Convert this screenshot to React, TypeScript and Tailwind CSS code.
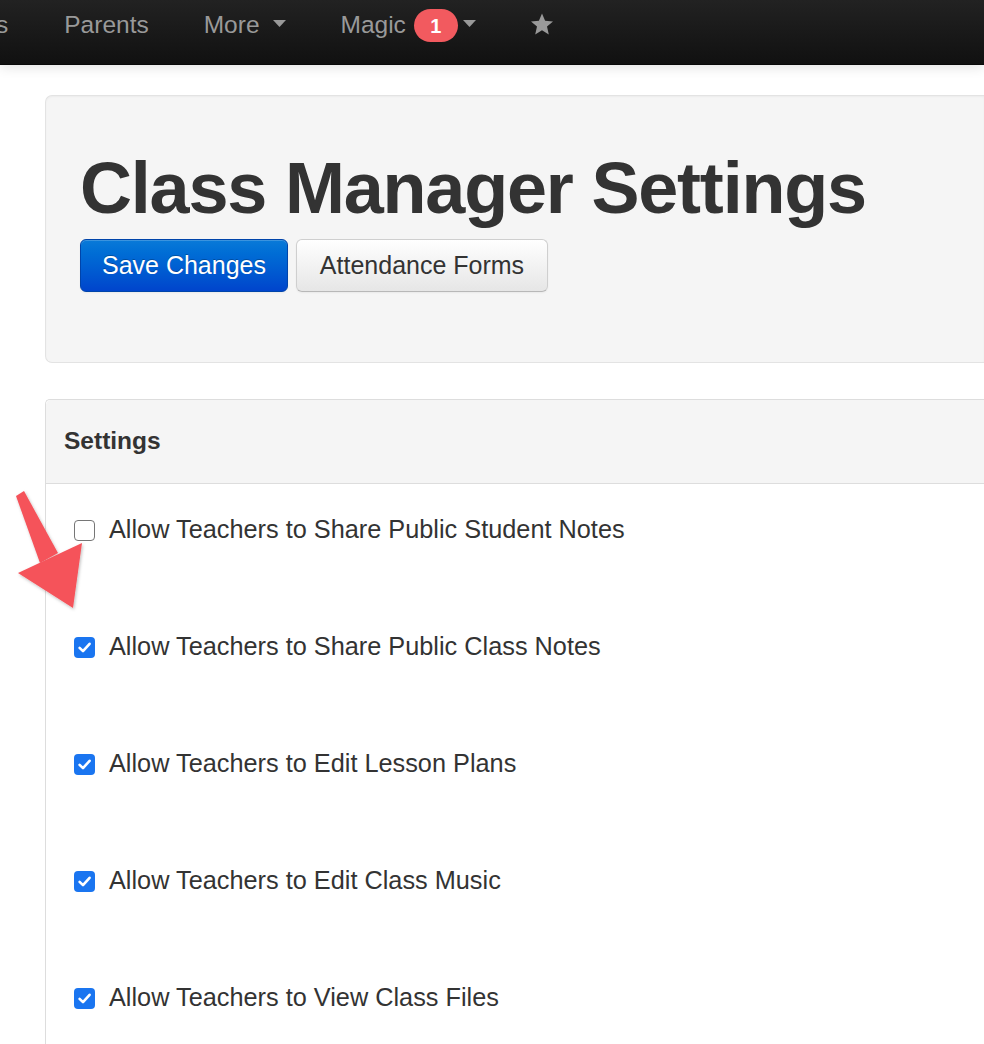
import React from "react";

const font = { fontFamily: '"Liberation Sans", Arial, Helvetica, sans-serif' };

function Caret({ className }: { className: string }) {
  return (
    <svg width="13" height="7" viewBox="0 0 13 7" className={className}>
      <path d="M0 0 L13 0 L6.5 7 Z" fill="#999" />
    </svg>
  );
}

function Star() {
  return (
    <svg width="24" height="23" viewBox="0 0 24 23">
      <path
        d="M12 0.5 L15.1 7.7 L23 8.4 L17 13.6 L18.8 21.4 L12 17.3 L5.2 21.4 L7 13.6 L1 8.4 L8.9 7.7 Z"
        fill="#999"
      />
    </svg>
  );
}

function Checkbox({ checked }: { checked: boolean }) {
  if (!checked) {
    return (
      <span className="box-border inline-block w-[21px] h-[21px] rounded-[4px] border-[1.5px] border-[#767676] bg-white shrink-0" />
    );
  }
  return (
    <span className="inline-flex items-center justify-center w-[21px] h-[21px] rounded-[4px] bg-[#1a75f0] shrink-0">
      <svg width="15" height="15" viewBox="0 0 15 15">
        <path
          d="M2.6 7.8 L6 11.2 L12.6 3.8"
          fill="none"
          stroke="#fff"
          strokeWidth="2.6"
          strokeLinecap="round"
          strokeLinejoin="round"
        />
      </svg>
    </span>
  );
}

const rows = [
  { label: "Allow Teachers to Share Public Student Notes", checked: false },
  { label: "Allow Teachers to Share Public Class Notes", checked: true },
  { label: "Allow Teachers to Edit Lesson Plans", checked: true },
  { label: "Allow Teachers to Edit Class Music", checked: true },
  { label: "Allow Teachers to View Class Files", checked: true },
];

export default function App() {
  return (
    <div className="relative min-h-[1044px] bg-white overflow-hidden" style={font}>
      {/* Navbar */}
      <div className="relative z-10 h-[65px] bg-gradient-to-b from-[#222] to-[#111] border-b border-[#0a0a0a] shadow-[0_2px_12px_rgba(0,0,0,0.12)]">
        <div className="flex items-start pt-[12px] text-[24.5px] leading-[25px] text-[#999] whitespace-nowrap">
          <span className="ml-[-4px] pr-[56px]">s</span>
          <span className="pr-[55px]">Parents</span>
          <span className="flex items-center h-[25px] pr-[55px]">
            More
            <Caret className="ml-[13px] mt-[-2px]" />
          </span>
          <span className="flex items-center h-[25px] pr-[54px]">
            Magic
            <span className="relative top-[1px] ml-[8px] inline-flex items-center justify-center w-[44px] h-[33px] rounded-full bg-[#f25a5f] text-white font-bold text-[20px] leading-none">
              1
            </span>
            <Caret className="ml-[5px] mt-[-2px]" />
          </span>
          <span className="flex items-center h-[25px]">
            <Star />
          </span>
        </div>
      </div>

      {/* Content */}
      <div className="pl-[45px] pt-[30px]">
        {/* Hero */}
        <div className="rounded-l-[7px] border border-r-0 border-[#e3e3e3] bg-[#f5f5f5] shadow-[inset_0_1px_2px_rgba(0,0,0,0.04)] pl-[34px] pt-[56px] pb-[70px]">
          <h1 className="text-[72px] leading-[72px] font-bold text-[#333] tracking-[-1.2px] whitespace-nowrap">
            Class Manager Settings
          </h1>
          <div className="mt-[15px] flex gap-[8px]">
            <button className="h-[53px] w-[208px] rounded-[6px] border border-[#0044aa] bg-gradient-to-b from-[#0a7ad8] to-[#0044cc] text-white text-[25px] [text-shadow:0_-1px_0_rgba(0,0,0,0.25)] shadow-[inset_0_1px_0_rgba(255,255,255,0.2),0_1px_2px_rgba(0,0,0,0.05)]">
              Save Changes
            </button>
            <button className="h-[53px] w-[252px] rounded-[6px] border border-[#cfcfcf] border-b-[#b8b8b8] bg-gradient-to-b from-white to-[#e6e6e6] text-[#333] text-[25px] shadow-[inset_0_1px_0_rgba(255,255,255,0.2),0_1px_2px_rgba(0,0,0,0.05)]">
              Attendance Forms
            </button>
          </div>
        </div>

        {/* Settings panel */}
        <div className="mt-[36px] rounded-tl-[5px] border border-r-0 border-b-0 border-[#ddd] min-h-[700px]">
          <div className="h-[84px] flex items-center px-[18px] bg-[#f5f5f5] border-b border-[#ddd] rounded-tl-[5px]">
            <span className="text-[24.5px] font-bold text-[#333]">Settings</span>
          </div>
          <div className="pt-[31px] pl-[28px] flex flex-col gap-[87px]">
            {rows.map((r) => (
              <label key={r.label} className="h-[30px] flex items-center gap-[14px] text-[25.3px] text-[#333] whitespace-nowrap">
                <Checkbox checked={r.checked} />
                <span>{r.label}</span>
              </label>
            ))}
          </div>
        </div>
      </div>

      {/* Annotation arrow */}
      <svg
        className="absolute left-0 top-0 pointer-events-none"
        width="120"
        height="640"
        viewBox="0 0 120 640"
      >
        <defs>
          <filter id="sh" x="-20%" y="-20%" width="140%" height="140%">
            <feDropShadow dx="1" dy="1.5" stdDeviation="1.5" floodColor="#000" floodOpacity="0.25" />
          </filter>
        </defs>
        <g filter="url(#sh)" fill="#f5525a">
          <path d="M16 496 L24 491 L58 553 L40 563 Z" />
          <path d="M18 573 L82 543 L73 608 Z" />
        </g>
      </svg>
    </div>
  );
}
